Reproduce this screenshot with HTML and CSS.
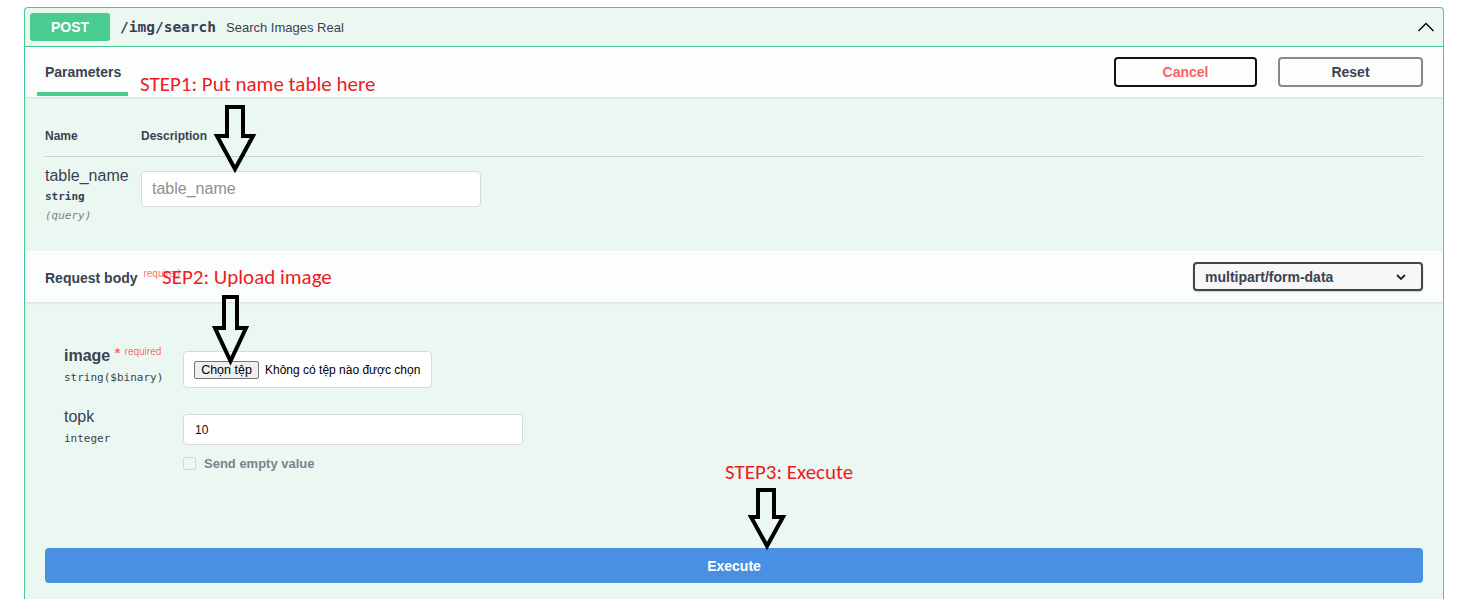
FILE: index.html
```html
<!DOCTYPE html>
<html>
<head>
<meta charset="utf-8">
<link rel="stylesheet" href="styles.css">
</head>
<body>
<div class="page">
  <div class="opblock">
    <div class="summary">
      <span class="method">POST</span>
      <span class="path">/img/search</span>
      <span class="desc">Search Images Real</span>
      <svg class="chev" width="20" height="20" viewBox="0 0 20 20"><polyline points="2.5,14 10,6.5 17.5,14" fill="none" stroke="#000" stroke-width="1.4"/></svg>
    </div>
    <div class="section-header">
      <div class="tab">
        <span class="tab-label">Parameters</span>
        <span class="tab-bar"></span>
      </div>
      <div class="btns">
        <button class="btn cancel">Cancel</button>
        <button class="btn reset">Reset</button>
      </div>
    </div>
    <div class="params">
      <div class="thead">
        <div class="col-name">Name</div>
        <div class="col-desc">Description</div>
      </div>
      <div class="prow">
        <div class="col-name">
          <div class="pname">table_name</div>
          <div class="ptype">string</div>
          <div class="pin">(query)</div>
        </div>
        <div class="col-desc">
          <input class="text-input" type="text" placeholder="table_name">
        </div>
      </div>
    </div>
    <div class="section-header rb">
      <div class="rb-title">Request body <sup class="req">required</sup></div>
      <div class="select">
        <span>multipart/form-data</span>
        <svg width="12" height="8" viewBox="0 0 12 8"><polyline points="2,2 6,6 10,2" fill="none" stroke="#222" stroke-width="1.8"/></svg>
      </div>
    </div>
    <div class="body">
      <div class="brow">
        <div class="bname">
          <div class="bn-title">image <span class="star">*</span> <sup class="req2">required</sup></div>
          <div class="btype">string($binary)</div>
        </div>
        <div class="bval">
          <div class="filebox">
            <span class="filebtn">Chọn tệp</span>
            <span class="filetext">Không có tệp nào được chọn</span>
          </div>
        </div>
      </div>
      <div class="brow row2">
        <div class="bname">
          <div class="bn-plain">topk</div>
          <div class="btype">integer</div>
        </div>
        <div class="bval">
          <input class="num-input" type="text" value="10">
          <div class="empty-toggle">
            <span class="cbox"></span>
            <span class="empty-label">Send empty value</span>
          </div>
        </div>
      </div>
      <button class="execute">Execute</button>
    </div>
  </div>

  <div class="note note1">STEP1: Put name table here</div>
  <div class="note note2">SEP2: Upload image</div>
  <div class="note note3">STEP3: Execute</div>

  <svg class="arrow arrow1" width="40" height="70" viewBox="0 0 40 70"><polygon points="8,2 24,2 24,31 34,31 16,64 -2,31 8,31" fill="none" stroke="#000" stroke-width="4" stroke-linejoin="miter"/></svg>
  <svg class="arrow arrow2" width="40" height="70" viewBox="0 0 40 70"><polygon points="8,2 21,2 21,33 30,33 14.5,66 -1,33 8,33" fill="none" stroke="#000" stroke-width="4" stroke-linejoin="miter"/></svg>
  <svg class="arrow arrow3" width="40" height="70" viewBox="0 0 40 70"><polygon points="8,2 24,2 24,29 33,29 17,58 1,29 8,29" fill="none" stroke="#000" stroke-width="4" stroke-linejoin="miter"/></svg>
</div>
</body>
</html>
```
FILE: styles.css
```css
* { box-sizing: border-box; }
html, body { margin: 0; padding: 0; background: #fff; }
body { font-family: "Liberation Sans", Arial, sans-serif; color: #3b4151; }

.page {
  position: relative;
  width: 1476px;
  padding: 7px 0 0 24px;
}

.opblock {
  width: 1420px;
  border: 1px solid #49cc90;
  border-bottom: none;
  border-radius: 4px 4px 0 0;
  background: #ebf8f2;
}

.summary {
  display: flex;
  align-items: center;
  padding: 5px;
  border-bottom: 1px solid #49cc90;
  height: 39px;
}
.method {
  width: 80px;
  height: 28px;
  border-radius: 3px;
  background: #49cc90;
  color: #fff;
  font-weight: bold;
  font-size: 14px;
  display: flex;
  align-items: center;
  justify-content: center;
}
.path {
  font-family: "DejaVu Sans Mono", monospace;
  font-weight: bold;
  font-size: 14.5px;
  color: #3b4151;
  margin-left: 10px;
}
.desc {
  font-size: 13px;
  margin-left: 10px;
  color: #3b4151;
}
.chev { margin-left: auto; margin-right: 2px; }

.section-header {
  display: flex;
  align-items: center;
  justify-content: space-between;
  height: 50px;
  padding: 0 20px;
  background: rgba(255,255,255,0.85);
  box-shadow: 0 1px 2px rgba(0,0,0,0.1);
  position: relative;
}
.tab {
  align-self: flex-start;
  display: flex;
  flex-direction: column;
  padding-top: 16px;
}
.tab-label {
  font-size: 14px;
  font-weight: bold;
  line-height: 18px;
}
.tab-bar {
  display: block;
  height: 4px;
  margin-top: 11px;
  margin-left: -8px;
  width: calc(100% + 15px);
  background: #49cc90;
}
.btns { display: flex; gap: 21px; }
.btn {
  height: 30px;
  border-radius: 4px;
  background: transparent;
  font-family: "Liberation Sans", Arial, sans-serif;
  font-size: 14px;
  font-weight: bold;
  padding: 0;
}
.cancel { width: 143px; border: 2px solid #111; color: #ff6060; }
.reset { width: 145px; border: 2px solid #888; color: #3b4151; }

.params { padding: 25px 20px 28px; }
.thead {
  display: flex;
  font-size: 12px;
  font-weight: bold;
  line-height: 14px;
  padding: 7px 0 13px;
  border-bottom: 1px solid rgba(59,65,81,0.2);
}
.col-name { width: 96px; flex: none; }
.col-desc { flex: 1; }
.prow { display: flex; padding-top: 10px; }
.pname { font-size: 16px; line-height: 18px; }
.ptype {
  font-family: "DejaVu Sans Mono", monospace;
  font-size: 11px;
  font-weight: bold;
  line-height: 16px;
  padding-top: 4px;
}
.pin {
  font-family: "DejaVu Sans Mono", monospace;
  font-size: 11px;
  font-style: italic;
  color: #808080;
  line-height: 14px;
  padding-top: 4px;
}
.text-input {
  display: block;
  margin-top: 4px;
  width: 340px;
  height: 36px;
  border: 1px solid #d9d9d9;
  border-radius: 4px;
  background: #fff;
  padding: 0 10px;
  font-family: "Liberation Sans", Arial, sans-serif;
  font-size: 16px;
}
.text-input::placeholder { color: #8f8f8f; }

.rb { height: 51px; }
.rb-title { font-size: 14px; font-weight: bold; }
.req {
  font-size: 10px;
  font-weight: normal;
  color: rgba(255,0,0,0.6);
  vertical-align: 6px;
  margin-left: 2px;
}
.select {
  width: 230px;
  height: 29px;
  border: 2px solid #41444e;
  border-radius: 4px;
  background: #f7f7f7;
  display: flex;
  align-items: center;
  justify-content: space-between;
  padding: 0 14px 0 10px;
  font-size: 14px;
  font-weight: bold;
  color: #3b4151;
  box-shadow: 0 1px 2px rgba(0,0,0,0.2);
}

.body { padding: 41px 20px 16px; }
.brow { display: flex; padding-left: 19px; }
.row2 { margin-top: 20px; }
.bname { width: 119px; flex: none; }
.bn-title { font-size: 16px; font-weight: bold; line-height: 18px; white-space: nowrap; }
.bn-plain { font-size: 16px; line-height: 18px; }
.star { color: rgba(255,0,0,0.6); font-size: 14px; vertical-align: 3px; }
.req2 { color: rgba(255,0,0,0.6); font-size: 10px; font-weight: normal; vertical-align: 6px; }
.btype {
  font-family: "DejaVu Sans Mono", monospace;
  font-size: 11px;
  line-height: 16px;
  padding-top: 5px;
  color: #3b4151;
}
.bval { flex: 1; }
.filebox {
  margin-top: 8px;
  width: 249px;
  height: 37px;
  background: #fff;
  border: 1px solid #d9d9d9;
  border-radius: 4px;
  display: flex;
  align-items: center;
  padding-left: 10px;
}
.filebtn {
  display: inline-flex;
  align-items: center;
  justify-content: center;
  width: 65px;
  height: 18px;
  background: #efefef;
  border: 1px solid #767676;
  border-radius: 2px;
  font-size: 12.5px;
  color: #000;
}
.filetext { font-size: 12px; color: #000; margin-left: 6px; }

.num-input {
  display: block;
  margin-top: 6px;
  width: 340px;
  height: 31px;
  border: 1px solid #d9d9d9;
  border-radius: 4px;
  background: #fff;
  padding: 0 11px;
  font-family: "Liberation Sans", Arial, sans-serif;
  font-size: 12px;
  color: #300;
}
.empty-toggle { display: flex; align-items: center; margin-top: 10px; height: 16px; }
.cbox {
  width: 13px;
  height: 13px;
  border: 1px solid #d5d5d5;
  border-radius: 2px;
  background: #f4f4f4;
}
.empty-label {
  margin-left: 8px;
  font-size: 13px;
  font-weight: bold;
  color: #7c8190;
}

.execute {
  display: block;
  margin-top: 77px;
  width: 100%;
  height: 35px;
  border: none;
  border-radius: 4px;
  background: #4990e2;
  color: #fff;
  font-family: "Liberation Sans", Arial, sans-serif;
  font-size: 14px;
  font-weight: bold;
}

.note {
  position: absolute;
  font-family: Carlito, "Open Sans", sans-serif;
  font-size: 21px;
  line-height: 24px;
  color: #ed1c24;
  white-space: nowrap;
}
.note1 { left: 140px; top: 72px; }
.note2 { left: 162px; top: 265px; }
.note3 { left: 725px; top: 460px; }

.arrow { position: absolute; overflow: visible; }
.arrow1 { left: 219px; top: 105px; }
.arrow2 { left: 216px; top: 295px; }
.arrow3 { left: 750px; top: 488px; }
```
